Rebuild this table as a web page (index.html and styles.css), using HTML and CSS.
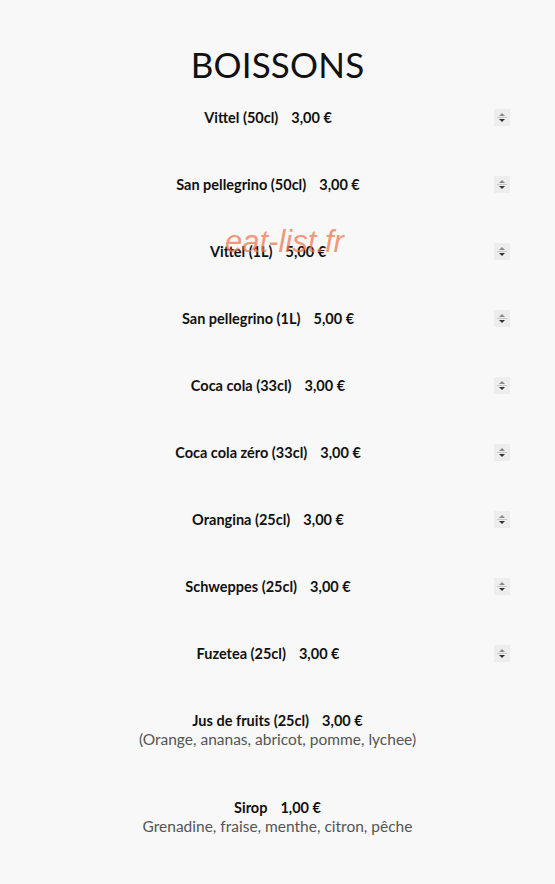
FILE: index.html
```html
<!DOCTYPE html>
<html lang="fr">
<head>
<meta charset="utf-8">
<title>Boissons</title>
<link rel="stylesheet" href="styles.css">
</head>
<body>
<main class="menu">
  <h1 class="title">BOISSONS</h1>
  <ul class="items">
    <li class="item"><div class="line"><span class="name">Vittel (50cl)</span><span class="price">3,00 €</span></div><span class="spin"><svg viewBox="0 0 16 17" width="16" height="17"><rect width="16" height="17" fill="#ededed"/><path d="M5 7 L8 4 L11 7 Z" fill="#8a8a8a"/><rect x="3" y="8" width="10" height="1" fill="#c8c8c8"/><path d="M5 10 L11 10 L8 13 Z" fill="#333"/></svg></span></li>
    <li class="item"><div class="line"><span class="name">San pellegrino (50cl)</span><span class="price">3,00 €</span></div><span class="spin"><svg viewBox="0 0 16 17" width="16" height="17"><rect width="16" height="17" fill="#ededed"/><path d="M5 7 L8 4 L11 7 Z" fill="#8a8a8a"/><rect x="3" y="8" width="10" height="1" fill="#c8c8c8"/><path d="M5 10 L11 10 L8 13 Z" fill="#333"/></svg></span></li>
    <li class="item"><div class="line"><span class="name">Vittel (1L)</span><span class="price">5,00 €</span></div><span class="spin"><svg viewBox="0 0 16 17" width="16" height="17"><rect width="16" height="17" fill="#ededed"/><path d="M5 7 L8 4 L11 7 Z" fill="#8a8a8a"/><rect x="3" y="8" width="10" height="1" fill="#c8c8c8"/><path d="M5 10 L11 10 L8 13 Z" fill="#333"/></svg></span><span class="watermark">eat-list.fr</span></li>
    <li class="item"><div class="line"><span class="name">San pellegrino (1L)</span><span class="price">5,00 €</span></div><span class="spin"><svg viewBox="0 0 16 17" width="16" height="17"><rect width="16" height="17" fill="#ededed"/><path d="M5 7 L8 4 L11 7 Z" fill="#8a8a8a"/><rect x="3" y="8" width="10" height="1" fill="#c8c8c8"/><path d="M5 10 L11 10 L8 13 Z" fill="#333"/></svg></span></li>
    <li class="item"><div class="line"><span class="name">Coca cola (33cl)</span><span class="price">3,00 €</span></div><span class="spin"><svg viewBox="0 0 16 17" width="16" height="17"><rect width="16" height="17" fill="#ededed"/><path d="M5 7 L8 4 L11 7 Z" fill="#8a8a8a"/><rect x="3" y="8" width="10" height="1" fill="#c8c8c8"/><path d="M5 10 L11 10 L8 13 Z" fill="#333"/></svg></span></li>
    <li class="item"><div class="line"><span class="name">Coca cola zéro (33cl)</span><span class="price">3,00 €</span></div><span class="spin"><svg viewBox="0 0 16 17" width="16" height="17"><rect width="16" height="17" fill="#ededed"/><path d="M5 7 L8 4 L11 7 Z" fill="#8a8a8a"/><rect x="3" y="8" width="10" height="1" fill="#c8c8c8"/><path d="M5 10 L11 10 L8 13 Z" fill="#333"/></svg></span></li>
    <li class="item"><div class="line"><span class="name">Orangina (25cl)</span><span class="price">3,00 €</span></div><span class="spin"><svg viewBox="0 0 16 17" width="16" height="17"><rect width="16" height="17" fill="#ededed"/><path d="M5 7 L8 4 L11 7 Z" fill="#8a8a8a"/><rect x="3" y="8" width="10" height="1" fill="#c8c8c8"/><path d="M5 10 L11 10 L8 13 Z" fill="#333"/></svg></span></li>
    <li class="item"><div class="line"><span class="name">Schweppes (25cl)</span><span class="price">3,00 €</span></div><span class="spin"><svg viewBox="0 0 16 17" width="16" height="17"><rect width="16" height="17" fill="#ededed"/><path d="M5 7 L8 4 L11 7 Z" fill="#8a8a8a"/><rect x="3" y="8" width="10" height="1" fill="#c8c8c8"/><path d="M5 10 L11 10 L8 13 Z" fill="#333"/></svg></span></li>
    <li class="item"><div class="line"><span class="name">Fuzetea (25cl)</span><span class="price">3,00 €</span></div><span class="spin"><svg viewBox="0 0 16 17" width="16" height="17"><rect width="16" height="17" fill="#ededed"/><path d="M5 7 L8 4 L11 7 Z" fill="#8a8a8a"/><rect x="3" y="8" width="10" height="1" fill="#c8c8c8"/><path d="M5 10 L11 10 L8 13 Z" fill="#333"/></svg></span></li>
    <li class="item item-plain"><div class="line"><span class="name">Jus de fruits (25cl)</span><span class="price">3,00 €</span></div><p class="desc">(Orange, ananas, abricot, pomme, lychee)</p></li>
    <li class="item item-plain item-last"><div class="line"><span class="name">Sirop</span><span class="price">1,00 €</span></div><p class="desc">Grenadine, fraise, menthe, citron, pêche</p></li>
  </ul>
</main>
</body>
</html>
```
FILE: styles.css
```css
html, body {
  margin: 0;
  padding: 0;
  background: #f8f8f8;
}
body {
  font-family: "Lato", "Open Sans", sans-serif;
  color: #111;
}
.menu {
  padding-top: 44px;
}
.title {
  margin: 0 0 23px;
  text-align: center;
  font-family: "Lato", sans-serif;
  font-weight: 400;
  font-size: 35px;
  line-height: 40px;
  letter-spacing: 0.2px;
  color: #111;
}
.items {
  list-style: none;
  margin: 0;
  padding: 0;
}
.item {
  position: relative;
  display: flex;
  height: 67px;
  align-items: flex-start;
  padding: 0 44px 0 42px;
}
.line {
  flex: 1;
  display: flex;
  justify-content: center;
  gap: 13px;
  font-weight: 700;
  font-size: 14.5px;
  line-height: 18px;
  padding-top: 2px;
}
.spin {
  display: flex;
  width: 17px;
  padding-top: 2px;
}
.spin svg {
  display: block;
}
.item-plain {
  flex-direction: column;
  align-items: stretch;
  padding: 0;
  height: 87px;
}
.item-plain .line {
  flex: none;
}
.desc {
  margin: 0;
  text-align: center;
  font-weight: 400;
  font-size: 15.5px;
  line-height: 18px;
  color: #555;
}
.watermark {
  position: absolute;
  left: 225px;
  top: -17px;
  font-family: "Liberation Sans", sans-serif;
  font-style: italic;
  font-size: 31px;
  color: rgba(240, 120, 80, 0.75);
  pointer-events: none;
}
```
